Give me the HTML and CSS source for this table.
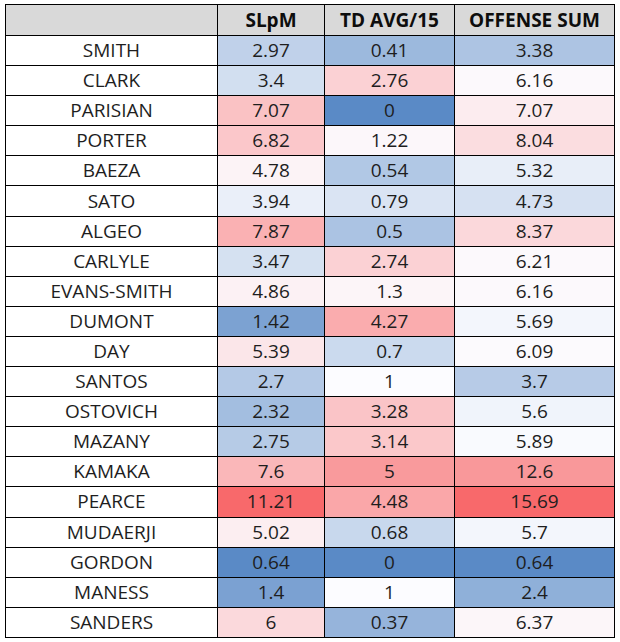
FILE: index.html
```html
<!DOCTYPE html>
<html lang="en">
<head>
<meta charset="utf-8">
<title>Offense stats</title>
<link rel="stylesheet" href="styles.css">
</head>
<body>
<table class="stats">
  <colgroup>
    <col class="c-name">
    <col class="c-slpm">
    <col class="c-td">
    <col class="c-sum">
  </colgroup>
  <thead>
    <tr><th></th><th>SLpM</th><th>TD AVG/15</th><th>OFFENSE SUM</th></tr>
  </thead>
  <tbody>
    <tr><td class="name">SMITH</td><td style="background:rgb(192,209,234)">2.97</td><td style="background:rgb(156,185,221)">0.41</td><td style="background:rgb(173,196,227)">3.38</td></tr>
    <tr><td class="name">CLARK</td><td style="background:rgb(210,223,240)">3.4</td><td style="background:rgb(251,209,212)">2.76</td><td style="background:rgb(252,249,252)">6.16</td></tr>
    <tr><td class="name">PARISIAN</td><td style="background:rgb(250,194,196)">7.07</td><td style="background:rgb(90,138,198)">0</td><td style="background:rgb(252,236,239)">7.07</td></tr>
    <tr><td class="name">PORTER</td><td style="background:rgb(251,199,202)">6.82</td><td style="background:rgb(252,247,250)">1.22</td><td style="background:rgb(251,221,224)">8.04</td></tr>
    <tr><td class="name">BAEZA</td><td style="background:rgb(252,243,246)">4.78</td><td style="background:rgb(177,200,229)">0.54</td><td style="background:rgb(232,238,248)">5.32</td></tr>
    <tr><td class="name">SATO</td><td style="background:rgb(234,239,249)">3.94</td><td style="background:rgb(218,228,243)">0.79</td><td style="background:rgb(214,225,242)">4.73</td></tr>
    <tr><td class="name">ALGEO</td><td style="background:rgb(250,177,179)">7.87</td><td style="background:rgb(171,195,227)">0.5</td><td style="background:rgb(251,216,219)">8.37</td></tr>
    <tr><td class="name">CARLYLE</td><td style="background:rgb(213,225,241)">3.47</td><td style="background:rgb(251,209,212)">2.74</td><td style="background:rgb(252,249,252)">6.21</td></tr>
    <tr><td class="name">EVANS-SMITH</td><td style="background:rgb(252,241,244)">4.86</td><td style="background:rgb(252,245,248)">1.3</td><td style="background:rgb(252,249,252)">6.16</td></tr>
    <tr><td class="name">DUMONT</td><td style="background:rgb(124,162,210)">1.42</td><td style="background:rgb(250,172,174)">4.27</td><td style="background:rgb(243,246,252)">5.69</td></tr>
    <tr><td class="name">DAY</td><td style="background:rgb(251,230,233)">5.39</td><td style="background:rgb(203,218,238)">0.7</td><td style="background:rgb(252,250,253)">6.09</td></tr>
    <tr><td class="name">SANTOS</td><td style="background:rgb(180,201,230)">2.7</td><td style="background:rgb(252,252,255)">1</td><td style="background:rgb(183,203,231)">3.7</td></tr>
    <tr><td class="name">OSTOVICH</td><td style="background:rgb(163,190,224)">2.32</td><td style="background:rgb(250,196,199)">3.28</td><td style="background:rgb(240,244,251)">5.6</td></tr>
    <tr><td class="name">MAZANY</td><td style="background:rgb(182,203,230)">2.75</td><td style="background:rgb(251,200,202)">3.14</td><td style="background:rgb(249,250,254)">5.89</td></tr>
    <tr><td class="name">KAMAKA</td><td style="background:rgb(250,183,185)">7.6</td><td style="background:rgb(249,154,156)">5</td><td style="background:rgb(249,152,154)">12.6</td></tr>
    <tr><td class="name">PEARCE</td><td style="background:rgb(248,105,107)">11.21</td><td style="background:rgb(250,167,169)">4.48</td><td style="background:rgb(248,105,107)">15.69</td></tr>
    <tr><td class="name">MUDAERJI</td><td style="background:rgb(252,238,241)">5.02</td><td style="background:rgb(200,216,237)">0.68</td><td style="background:rgb(243,246,252)">5.7</td></tr>
    <tr><td class="name">GORDON</td><td style="background:rgb(90,138,198)">0.64</td><td style="background:rgb(90,138,198)">0</td><td style="background:rgb(90,138,198)">0.64</td></tr>
    <tr><td class="name">MANESS</td><td style="background:rgb(123,161,210)">1.4</td><td style="background:rgb(252,252,255)">1</td><td style="background:rgb(143,176,217)">2.4</td></tr>
    <tr><td class="name">SANDERS</td><td style="background:rgb(251,217,220)">6</td><td style="background:rgb(150,180,219)">0.37</td><td style="background:rgb(252,246,249)">6.37</td></tr>
  </tbody>
</table>
</body>
</html>
```

FILE: styles.css
```css
html, body {
  margin: 0;
  padding: 0;
  background: #ffffff;
}

body {
  font-family: "Open Sans", "Noto Sans", "Liberation Sans", sans-serif;
  color: #1e1e1e;
}

.stats {
  border-collapse: collapse;
  table-layout: fixed;
  width: 610px;
  margin: 4px 0 0 5px;
}

.c-name { width: 212px; }
.c-slpm { width: 107px; }
.c-td   { width: 130px; }
.c-sum  { width: 160px; }

.stats th,
.stats td {
  border: 1px solid #000000;
  padding: 0;
  text-align: center;
  vertical-align: middle;
  white-space: nowrap;
}

.stats thead th {
  background: #d9d9d9;
  height: 30px;
  font-size: 19px;
  font-weight: 700;
  color: #0d0d0d;
}

.stats tbody td {
  height: 29.1px;
  font-size: 19px;
  font-weight: 400;
  line-height: 1;
}
```
